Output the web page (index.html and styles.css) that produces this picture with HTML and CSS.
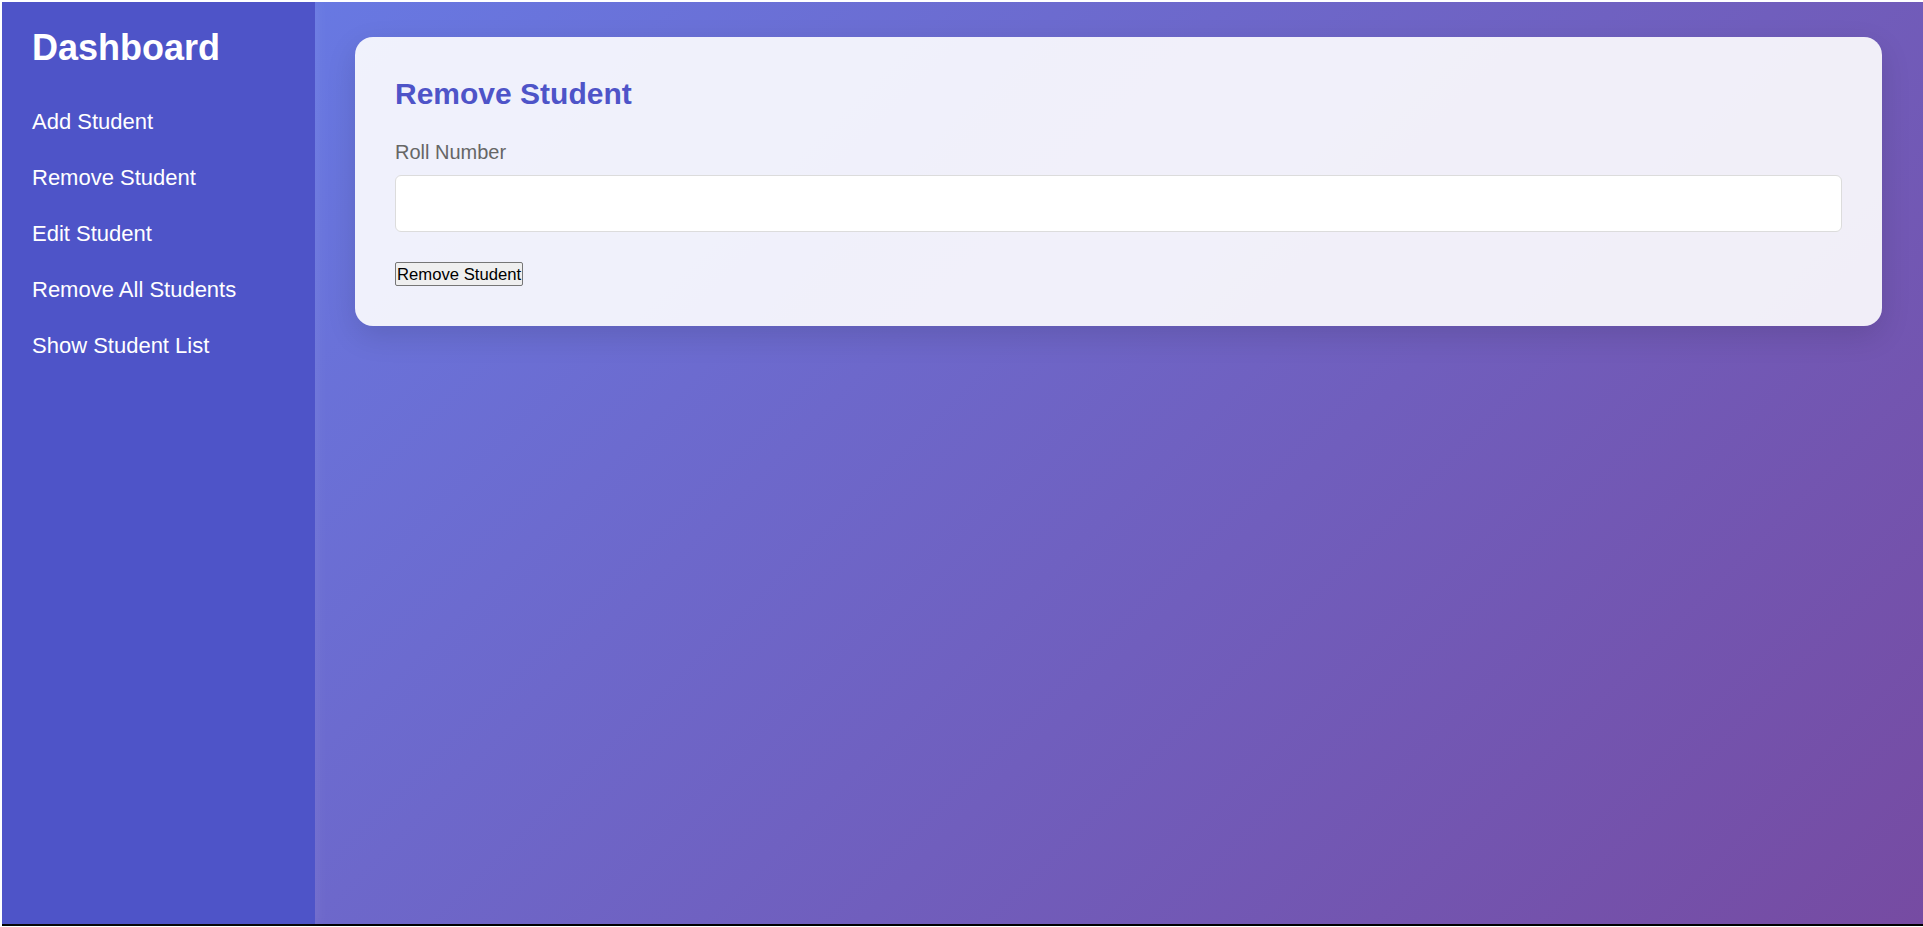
FILE: index.html
```html
<!DOCTYPE html>
<html lang="en">
<head>
<meta charset="utf-8">
<title>Dashboard</title>
<link rel="stylesheet" href="styles.css">
</head>
<body>
<div class="app">
  <aside class="sidebar">
    <h1 class="brand">Dashboard</h1>
    <nav class="nav">
      <a class="nav-link" href="#">Add Student</a>
      <a class="nav-link" href="#">Remove Student</a>
      <a class="nav-link" href="#">Edit Student</a>
      <a class="nav-link" href="#">Remove All Students</a>
      <a class="nav-link" href="#">Show Student List</a>
    </nav>
  </aside>
  <main class="main">
    <section class="card">
      <h2 class="card-title">Remove Student</h2>
      <label class="field-label" for="roll">Roll Number</label>
      <input class="field-input" id="roll" type="text">
      <div class="actions">
        <button class="btn" type="button">Remove Student</button>
      </div>
    </section>
  </main>
</div>
</body>
</html>
```

FILE: styles.css
```css
html, body {
  margin: 0;
  padding: 0;
  background: #ffffff;
}

body {
  font-family: "Liberation Sans", Arial, sans-serif;
}

.app {
  display: flex;
  margin: 2px 0 0 2px;
  height: 922px;
  border-bottom: 2px solid #000;
  background: linear-gradient(135deg, #667eea 0%, #764ba2 100%);
}

.sidebar {
  width: 313px;
  flex: 0 0 313px;
  background: #4e54c8;
  color: #fff;
  box-sizing: border-box;
  padding: 25px 0 0 30px;
  box-shadow: 2px 0 12px rgba(255, 255, 255, 0.08);
  position: relative;
  z-index: 1;
}

.brand {
  margin: 0;
  font-size: 36px;
  font-weight: bold;
  line-height: 41px;
}

.nav {
  display: flex;
  flex-direction: column;
  margin-top: 25px;
}

.nav-link {
  display: block;
  color: #fff;
  text-decoration: none;
  font-size: 22px;
  line-height: 25px;
  padding: 15.5px 0;
}

.main {
  flex: 1;
  padding: 35px 41px 0 40px;
}

.card {
  background: rgba(255, 255, 255, 0.9);
  border-radius: 18px;
  padding: 40px 40px 40px 40px;
  box-shadow: 0 10px 30px rgba(0, 0, 0, 0.12);
}

.card-title {
  margin: 0;
  color: #4e54c8;
  font-size: 30px;
  font-weight: bold;
  line-height: 34px;
}

.field-label {
  display: block;
  margin-top: 30px;
  color: #666;
  font-size: 20px;
  line-height: 23px;
}

.field-input {
  display: block;
  box-sizing: border-box;
  width: 100%;
  height: 57px;
  margin-top: 11px;
  border: 1px solid #dcdcdc;
  border-radius: 6px;
  background: #fff;
  font-size: 20px;
  padding: 0 12px;
}

.actions {
  margin-top: 30px;
  line-height: 0;
}

.btn {
  font-family: "Liberation Sans", Arial, sans-serif;
  font-size: 16.67px;
  line-height: 19px;
  padding: 1px 1px;
  height: 24px;
  background: #efefef;
  border: 1px solid #767676;
  border-radius: 2px;
  color: #000;
}
```
